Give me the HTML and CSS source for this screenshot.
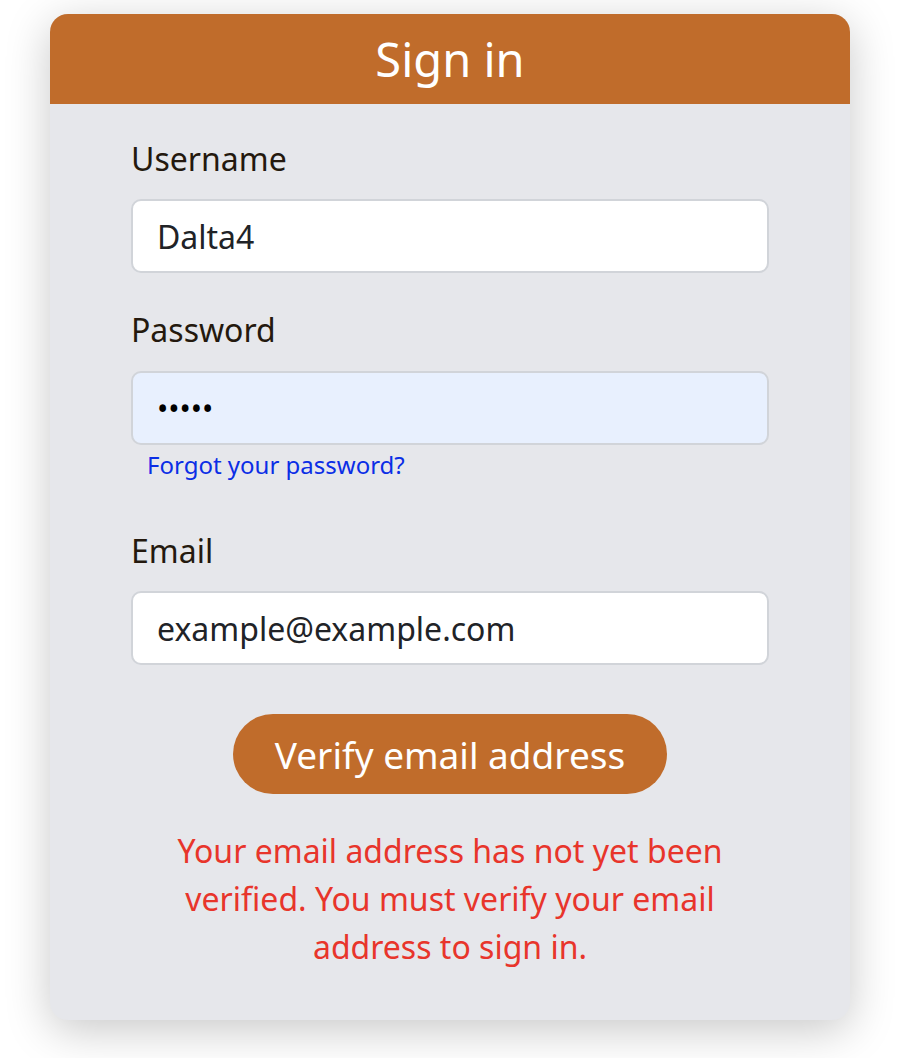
FILE: index.html
```html
<!DOCTYPE html>
<html lang="en">
<head>
<meta charset="utf-8">
<title>Sign in</title>
<link rel="stylesheet" href="styles.css">
</head>
<body>
<div class="card">
  <div class="card-header">Sign in</div>
  <form class="card-body">
    <label class="field-label" for="username">Username</label>
    <input class="field-input" id="username" type="text" value="Dalta4">
    <label class="field-label second" for="password">Password</label>
    <input class="field-input autofill" id="password" type="password" value="abcde">
    <a class="forgot" href="#">Forgot your password?</a>
    <label class="field-label third" for="email">Email</label>
    <input class="field-input" id="email" type="text" value="example@example.com">
    <div class="actions">
      <button class="verify-btn" type="button">Verify email address</button>
    </div>
    <p class="error">Your email address has not yet been verified. You must verify your email address to sign in.</p>
  </form>
</div>
</body>
</html>
```

FILE: styles.css
```css
html, body {
  margin: 0;
  padding: 0;
  background: #ffffff;
}
body {
  font-family: "Noto Sans", "Open Sans", sans-serif;
  padding: 14px 0 40px 2px;
}
.card {
  width: 800px;
  margin: 0 auto;
  background: #e6e7eb;
  border-radius: 18px;
  overflow: hidden;
  box-shadow: 0 10px 45px rgba(0, 0, 0, 0.22);
}
.card-header {
  height: 90px;
  background: #c06c2b;
  color: #ffffff;
  font-size: 47px;
  line-height: 90px;
  text-align: center;
}
.card-body {
  display: flex;
  flex-direction: column;
  padding: 35px 81px 49px;
  margin: 0;
}
.field-label {
  font-size: 32px;
  line-height: 40px;
  color: #24190e;
  margin-bottom: 20px;
}
.field-label.second {
  margin-top: 37px;
  margin-bottom: 21px;
}
.field-label.third {
  margin-top: 51px;
}
.field-input {
  box-sizing: border-box;
  height: 74px;
  width: 100%;
  margin: 0;
  border: 2px solid #d1d4d9;
  border-radius: 10px;
  background: #ffffff;
  padding: 0 24px;
  font-family: inherit;
  font-size: 32px;
  color: #212327;
  outline: none;
}
.field-input.autofill {
  background: #e8f0fe;
  font-size: 30px;
  color: #000000;
}
.forgot {
  align-self: flex-start;
  margin: 5px 0 0 16px;
  font-size: 24px;
  line-height: 30px;
  color: #0b2ee6;
  text-decoration: none;
}
.actions {
  display: flex;
  justify-content: center;
  margin-top: 49px;
}
.verify-btn {
  height: 80px;
  padding: 0 42px;
  border: none;
  border-radius: 40px;
  background: #c06c2b;
  color: #ffffff;
  font-family: inherit;
  font-size: 37px;
  cursor: pointer;
}
.error {
  margin: 33px auto 0;
  max-width: 570px;
  text-align: center;
  color: #e8352b;
  font-size: 32px;
  line-height: 48px;
}
```
